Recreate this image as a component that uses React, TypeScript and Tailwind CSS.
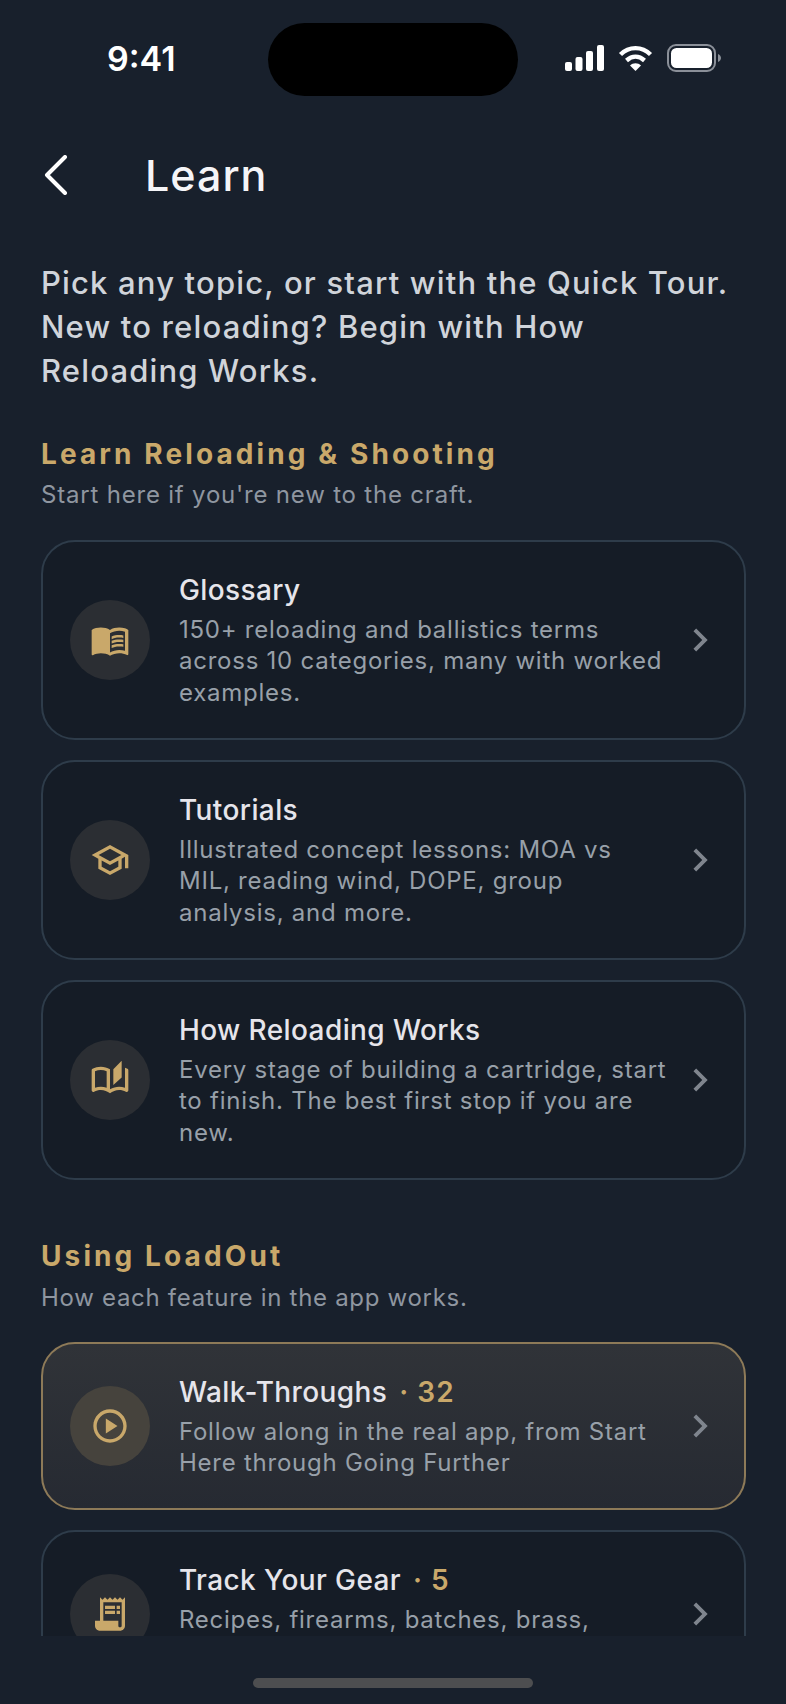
import React from 'react';
import { MdMenuBook, MdOutlineSchool, MdOutlineAutoStories, MdOutlinePlayCircle, MdReceiptLong, MdChevronRight } from 'react-icons/md';

const font = { fontFamily: 'Inter, sans-serif' };

function StatusIcons() {
  return (
    <div className="flex items-center gap-[14px]">
      <svg width="39" height="26" viewBox="0 0 39 26" fill="#fff">
        <rect x="0" y="17" width="7" height="9" rx="2" />
        <rect x="10.5" y="12" width="7" height="14" rx="2" />
        <rect x="21" y="6" width="7" height="20" rx="2" />
        <rect x="32" y="0" width="7" height="26" rx="2" />
      </svg>
      <svg width="35" height="26" viewBox="0 0 34 26" fill="none" stroke="#fff" strokeWidth="4.4">
        <path d="M2 9.5C10.5 1 23.5 1 32 9.5" />
        <path d="M8 15.5C13.5 10.5 20.5 10.5 26 15.5" />
        <path d="M17 26L11.5 20.5C14.5 17.5 19.5 17.5 22.5 20.5Z" fill="#fff" stroke="none" />
      </svg>
      <svg width="54" height="28" viewBox="0 0 54 28" fill="none">
        <rect x="1" y="1" width="47" height="26" rx="8" stroke="#8b9099" strokeWidth="2" />
        <rect x="4" y="4" width="41" height="20" rx="5.5" fill="#fff" />
        <path d="M51 10C53 11 54 12.5 54 14C54 15.5 53 17 51 18Z" fill="#8b9099" />
      </svg>
    </div>
  );
}

interface RowProps {
  icon: React.ReactNode;
  title: string;
  count?: number;
  desc: string;
  featured?: boolean;
  compact?: boolean;
}

function Row({ icon, title, count, desc, featured, compact }: RowProps) {
  return (
    <div
      className={`flex items-center rounded-[34px] border-2 pl-[27px] pr-[21px] shrink-0 ${compact ? 'h-[168px]' : 'h-[200px]'} ${
        featured
          ? 'border-[#8d7a58] bg-gradient-to-b from-[#303338] to-[#262a32]'
          : 'border-[#2e3c4a] bg-[#151c26]'
      }`}
    >
      <div
        className={`w-[80px] h-[80px] rounded-full flex items-center justify-center shrink-0 text-[#c9a86a] ${
          featured ? 'bg-[#46433d]' : 'bg-[#2b2e33]'
        }`}
      >
        {icon}
      </div>
      <div className="flex-1 ml-[29px]">
        <div className="text-[28px] leading-[36px] font-medium text-[#e6e5eb] tracking-[0.4px]">
          {title}
          {count !== undefined && (
            <span className="text-[#c9a86a] font-semibold tracking-[1px]"><span className="ml-[12px]">·</span> {count}</span>
          )}
        </div>
        <div className="text-[24px] leading-[31.5px] min-h-[63px] text-[#98a0a9] tracking-[0.75px] mt-[6px]">{desc}</div>
      </div>
      <MdChevronRight size={46} className="text-[#7f858e] shrink-0 ml-[8px]" />
    </div>
  );
}

export default function App() {
  return (
    <div className="w-[786px] h-[1704px] bg-[#18202c] flex flex-col overflow-hidden" style={font}>
      <div className="h-[73px] mt-[23px] pb-[3px] flex items-center justify-between pl-[107px] pr-[65px] relative shrink-0">
        <span className="text-[34px] font-semibold text-white">9:41</span>
        <div className="w-[250px] h-[73px] rounded-[37px] bg-black absolute left-[268px] top-0" />
        <StatusIcons />
      </div>

      <div className="flex items-center mt-[54px] pl-[44px] shrink-0">
        <svg width="24" height="40" viewBox="0 0 24 40" fill="none" stroke="#fff" strokeWidth="4" strokeLinecap="round" strokeLinejoin="round">
          <polyline points="21,2 3,20 21,38" />
        </svg>
        <h1 className="ml-[77px] text-[43px] leading-[50px] font-medium text-[#f5f5f8] tracking-[1px]">Learn</h1>
      </div>

      <div className="flex-1 min-h-0 overflow-hidden px-[41px] mt-[61px] flex flex-col">
        <p className="text-[31px] leading-[44px] font-medium text-[#d0d4da] tracking-[1.17px] shrink-0">
          Pick any topic, or start with the Quick Tour. New to reloading? Begin with How Reloading Works.
        </p>

        <h2 className="mt-[43px] text-[28px] leading-[36px] font-bold text-[#c9a86a] tracking-[3.1px] shrink-0">Learn Reloading &amp; Shooting</h2>
        <p className="mt-[7px] text-[24px] leading-[32px] text-[#8f96a0] tracking-[0.8px] shrink-0">Start here if you're new to the craft.</p>

        <div className="mt-[29px] -mr-[1px] flex flex-col gap-[20px] shrink-0">
          <Row icon={<MdMenuBook size={40} />} title="Glossary" desc="150+ reloading and ballistics terms across 10 categories, many with worked examples." />
          <Row icon={<MdOutlineSchool size={40} />} title="Tutorials" desc="Illustrated concept lessons: MOA vs MIL, reading wind, DOPE, group analysis, and more." />
          <Row icon={<MdOutlineAutoStories size={40} />} title="How Reloading Works" desc="Every stage of building a cartridge, start to finish. The best first stop if you are new." />
        </div>

        <h2 className="mt-[58px] text-[28px] leading-[36px] font-bold text-[#c9a86a] tracking-[3.1px] shrink-0">Using LoadOut</h2>
        <p className="mt-[8px] text-[24px] leading-[32px] text-[#8f96a0] tracking-[0.7px] shrink-0">How each feature in the app works.</p>

        <div className="mt-[28px] -mr-[1px] flex flex-col gap-[20px] shrink-0">
          <Row compact featured icon={<MdOutlinePlayCircle size={40} />} title="Walk-Throughs" count={32} desc="Follow along in the real app, from Start Here through Going Further" />
          <Row compact icon={<MdReceiptLong size={40} />} title="Track Your Gear" count={5} desc="Recipes, firearms, batches, brass," />
        </div>
      </div>

      <div className="h-[68px] flex items-start justify-center pt-[42px] shrink-0">
        <div className="w-[280px] h-[10px] rounded-full bg-[#4d4e50]" />
      </div>
    </div>
  );
}
